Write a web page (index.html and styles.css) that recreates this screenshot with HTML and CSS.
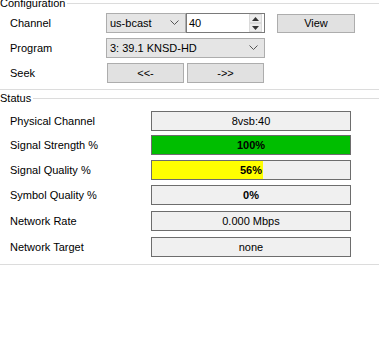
FILE: index.html
```html
<!DOCTYPE html>
<html>
<head>
<meta charset="utf-8">
<link rel="stylesheet" href="styles.css">
</head>
<body>
<div class="group cfg">
  <div class="legend"><span class="legend-text">Configuration</span><span class="legend-line"></span></div>
  <div class="row">
    <span class="label">Channel</span>
    <div class="combo combo-ch"><span>us-bcast</span><svg class="chev" width="9" height="6" viewBox="0 0 9 6"><path d="M0.5 0.5 L4.5 4.5 L8.5 0.5" fill="none" stroke="#555" stroke-width="1"/></svg></div>
    <div class="num"><span>40</span>
      <div class="spin">
        <div class="spin-btn"><svg width="7" height="4" viewBox="0 0 7 4"><path d="M0 4 L3.5 0 L7 4 Z" fill="#333"/></svg></div>
        <div class="spin-btn"><svg width="7" height="4" viewBox="0 0 7 4"><path d="M0 0 L3.5 4 L7 0 Z" fill="#333"/></svg></div>
      </div>
    </div>
    <button class="btn btn-view">View</button>
  </div>
  <div class="row">
    <span class="label">Program</span>
    <div class="combo combo-prog"><span>3: 39.1 KNSD-HD</span><svg class="chev" width="9" height="6" viewBox="0 0 9 6"><path d="M0.5 0.5 L4.5 4.5 L8.5 0.5" fill="none" stroke="#555" stroke-width="1"/></svg></div>
  </div>
  <div class="row">
    <span class="label">Seek</span>
    <div class="seek">
      <button class="btn btn-seek">&lt;&lt;-</button>
      <button class="btn btn-seek">-&gt;&gt;</button>
    </div>
  </div>
</div>
<div class="group status">
  <div class="legend"><span class="legend-text">Status</span><span class="legend-line"></span></div>
  <div class="srow"><span class="label2">Physical Channel</span><div class="box"><span class="val">8vsb:40</span></div></div>
  <div class="srow"><span class="label2">Signal Strength %</span><div class="box"><div class="fill green" style="width:100%"></div><span class="val bold">100%</span></div></div>
  <div class="srow"><span class="label2">Signal Quality %</span><div class="box"><div class="fill yellow" style="width:56%"></div><span class="val bold">56%</span></div></div>
  <div class="srow"><span class="label2">Symbol Quality %</span><div class="box"><span class="val bold">0%</span></div></div>
  <div class="srow"><span class="label2">Network Rate</span><div class="box"><span class="val">0.000 Mbps</span></div></div>
  <div class="srow"><span class="label2">Network Target</span><div class="box"><span class="val">none</span></div></div>
</div>
</body>
</html>
```
FILE: styles.css
```css
html, body {
  margin: 0;
  padding: 0;
  background: #ffffff;
}
body {
  font-family: "Liberation Sans", Arial, sans-serif;
  font-size: 11px;
  color: #000;
  width: 379px;
  height: 339px;
  overflow: hidden;
}
.group {
  border-bottom: 1px solid #dcdcdc;
}
.legend {
  display: flex;
  align-items: center;
  height: 13px;
  line-height: 13px;
}
.legend-text {
  padding-right: 2px;
}
.legend-line {
  flex: 1;
  height: 1px;
  background: #dcdcdc;
}
.cfg .legend {
  margin-top: -3px;
}
.cfg {
  padding-bottom: 6px;
}
.row {
  display: flex;
  align-items: center;
  height: 20px;
  margin-top: 5px;
  padding-left: 10px;
}
.cfg .legend + .row {
  margin-top: 3px;
}
.label {
  width: 96px;
  flex: none;
}
.combo {
  box-sizing: border-box;
  height: 20px;
  border: 1px solid #adadad;
  background: #e5e5e5;
  display: flex;
  align-items: center;
  justify-content: space-between;
  padding: 0 6px 0 3px;
}
.combo-ch { width: 80px; }
.combo-prog { width: 159px; }
.num {
  box-sizing: border-box;
  width: 79px;
  height: 20px;
  border: 1px solid #7a7a7a;
  background: #fff;
  display: flex;
  align-items: center;
  justify-content: space-between;
  padding-left: 2px;
}
.spin {
  display: flex;
  flex-direction: column;
  width: 13px;
  height: 18px;
  margin-right: 2px;
}
.spin-btn {
  flex: 1;
  display: flex;
  align-items: center;
  justify-content: center;
  background: #ececec;
  border: 1px solid #dadada;
  box-sizing: border-box;
}
.btn {
  box-sizing: border-box;
  height: 20px;
  border: 1px solid #adadad;
  background: #e1e1e1;
  font-family: inherit;
  font-size: 11px;
  color: #000;
  padding: 0;
}
.btn-view {
  width: 78px;
  margin-left: 12px;
  height: 19px;
}
.seek {
  display: flex;
  gap: 3px;
  margin-left: 1px;
}
.btn-seek {
  width: 77px;
}
.status {
  margin-top: 2px;
  padding-bottom: 7px;
}
.srow {
  display: flex;
  align-items: center;
  height: 20px;
  margin-top: 5px;
  padding-left: 10px;
}
.status .legend + .srow {
  margin-top: 6px;
}
.status .legend + .srow + .srow {
  margin-top: 4px;
}
.srow:nth-child(n+6) { margin-top: 6px; }
.label2 {
  width: 141px;
  flex: none;
}
.box {
  position: relative;
  box-sizing: border-box;
  width: 200px;
  height: 20px;
  border: 1px solid #6d6d6d;
  background: #f0f0f0;
  display: flex;
  align-items: center;
  justify-content: center;
}
.fill {
  position: absolute;
  left: 0;
  top: 0;
  bottom: 0;
}
.green { background: #00be00; }
.yellow { background: #ffff00; }
.val {
  position: relative;
}
.bold { font-weight: bold; }
```
